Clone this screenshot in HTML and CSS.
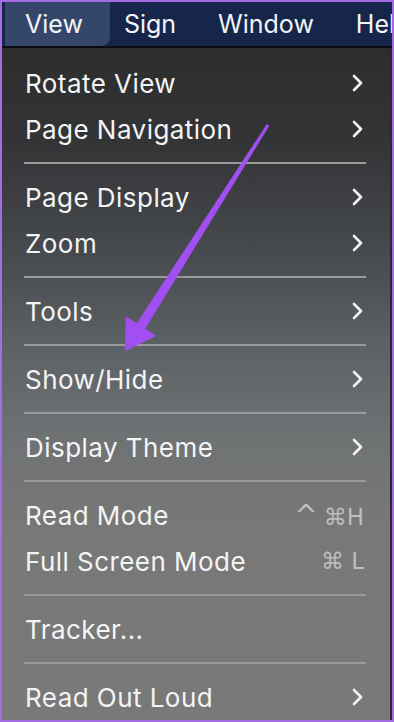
FILE: index.html
```html
<html>
<head>
<title>View menu</title>
<link rel="stylesheet" href="styles.css">
</head>
<body>
<div class="frame">

  <div class="menubar">
    <span class="menubar-item active">View</span>
    <span class="menubar-item">Sign</span>
    <span class="menubar-item">Window</span>
    <span class="menubar-item">Help</span>
  </div>

  <div class="menu">
    <div class="menu-item"><span>Rotate View</span><svg class="chevron" viewBox="0 0 12 18"><polyline points="2,2 9,9 2,16" /></svg></div>
    <div class="menu-item"><span>Page Navigation</span><svg class="chevron" viewBox="0 0 12 18"><polyline points="2,2 9,9 2,16" /></svg></div>
    <div class="separator"></div>
    <div class="menu-item"><span>Page Display</span><svg class="chevron" viewBox="0 0 12 18"><polyline points="2,2 9,9 2,16" /></svg></div>
    <div class="menu-item"><span>Zoom</span><svg class="chevron" viewBox="0 0 12 18"><polyline points="2,2 9,9 2,16" /></svg></div>
    <div class="separator"></div>
    <div class="menu-item"><span>Tools</span><svg class="chevron" viewBox="0 0 12 18"><polyline points="2,2 9,9 2,16" /></svg></div>
    <div class="separator"></div>
    <div class="menu-item"><span>Show/Hide</span><svg class="chevron" viewBox="0 0 12 18"><polyline points="2,2 9,9 2,16" /></svg></div>
    <div class="separator"></div>
    <div class="menu-item"><span>Display Theme</span><svg class="chevron" viewBox="0 0 12 18"><polyline points="2,2 9,9 2,16" /></svg></div>
    <div class="separator"></div>
    <div class="menu-item"><span>Read Mode</span><span class="shortcut"><span class="caret">^</span>⌘H</span></div>
    <div class="menu-item"><span>Full Screen Mode</span><span class="shortcut">⌘ L</span></div>
    <div class="separator"></div>
    <div class="menu-item"><span>Tracker...</span></div>
    <div class="separator"></div>
    <div class="menu-item"><span>Read Out Loud</span><svg class="chevron" viewBox="0 0 12 18"><polyline points="2,2 9,9 2,16" /></svg></div>
  </div>

  <!-- annotation arrow drawn over the menu -->
  <svg class="arrow" width="394" height="722" viewBox="0 0 394 722">
    <polygon points="266.7,124.2 269.3,125.8 145.2,328.7 156.2,335.7 124.8,351.3 125.8,316.3 136.8,323.3" />
  </svg>

</div>
</body>
</html>
```

FILE: styles.css
```css
* {
  margin: 0;
  padding: 0;
  box-sizing: border-box;
}

body {
  width: 394px;
  height: 722px;
  overflow: hidden;
  font-family: Inter, "Liberation Sans", sans-serif;
  background: #a66ce3;
}

.frame {
  position: relative;
  width: 394px;
  height: 722px;
  border: 2px solid #a66ce3;
  display: flex;
  flex-direction: column;
  background: #2a2a2c;
}

.menubar {
  height: 46px;
  background: #15264a;
  display: flex;
  align-items: center;
  overflow: hidden;
  white-space: nowrap;
  border-bottom: 2px solid #0c0c10;
}

.menubar-item {
  font-size: 25px;
  color: #f2f4f8;
  padding: 0 21px;
  height: 44px;
  line-height: 44px;
  flex-shrink: 0;
}

.menubar-item.active {
  margin-left: 3px;
  margin-right: -7px;
  padding: 0 27px 0 20px;
  background: #34466a;
  border-bottom-right-radius: 9px;
}

.menu {
  flex: 1;
  margin-right: 2px;
  padding-top: 12px;
  border-top-right-radius: 8px;
  background: linear-gradient(#2d2d2d 0%, #333436 14%, #46494d 30%, #5c6166 44%, #6f7273 58%, #787878 72%, #797979 100%);
}

.menu-item {
  height: 46px;
  display: flex;
  align-items: center;
  justify-content: space-between;
  padding: 0 26px 0 23px;
  font-size: 26px;
  letter-spacing: 0.45px;
  color: #f4f4f4;
}

.chevron {
  width: 12px;
  height: 18px;
  fill: none;
  stroke: #f4f4f4;
  stroke-width: 2.6;
  stroke-linecap: round;
  stroke-linejoin: round;
}

.shortcut {
  color: #bdbdbd;
  font-family: "DejaVu Sans", sans-serif;
  font-size: 23px;
  letter-spacing: 0;
}

.caret {
  font-size: 28px;
  margin-right: 6px;
}

.separator {
  height: 22px;
  display: flex;
  align-items: center;
  padding: 0 24px 0 22px;
}

.separator::after {
  content: "";
  flex: 1;
  height: 2px;
  background: #9a9a9a;
}

.arrow {
  position: absolute;
  left: -2px;
  top: -2px;
  fill: #a24ff2;
}
```
